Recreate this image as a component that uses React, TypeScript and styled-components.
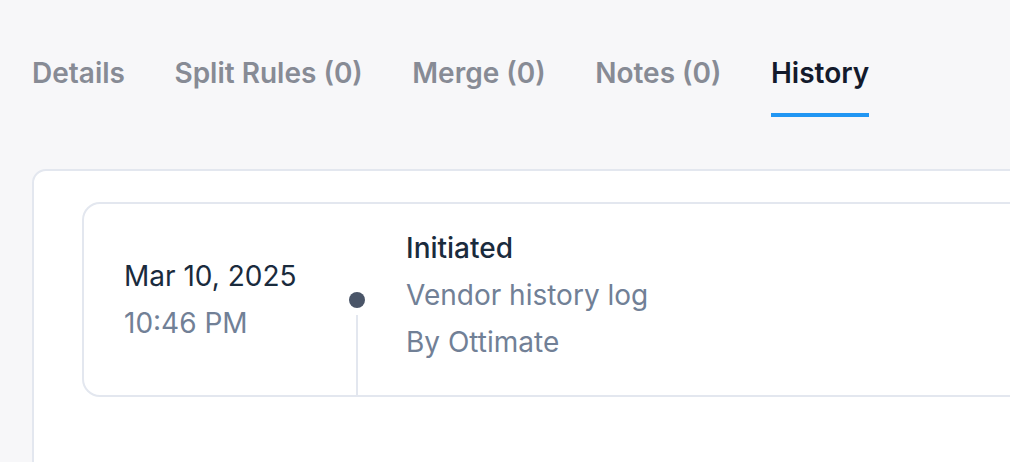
import React from "react";
import styled, { createGlobalStyle } from "styled-components";

const GlobalStyle = createGlobalStyle`
  html, body {
    margin: 0;
    padding: 0;
    background: #f7f7f9;
    overflow: hidden;
  }
  body {
    font-family: Inter, "Noto Sans", "Liberation Sans", sans-serif;
  }
`;

const Page = styled.div`
  width: 1200px;
  height: 462px;
  padding: 56px 0 0 32px;
  box-sizing: border-box;
`;

const TabBar = styled.nav`
  display: flex;
  gap: 49.5px;
`;

const Tab = styled.div<{ $active?: boolean }>`
  font-size: 28px;
  line-height: 34px;
  font-weight: 600;
  color: ${(p) => (p.$active ? "#131a2c" : "#878b95")};
  padding-bottom: 23px;
  border-bottom: 4px solid ${(p) => (p.$active ? "#2196f3" : "transparent")};
`;

const Panel = styled.section`
  margin-top: 52px;
  background: #ffffff;
  border: 2px solid #e3e7ef;
  border-radius: 14px;
  padding: 31px 0 40px 48px;
  height: 400px;
  box-sizing: border-box;
`;

const Entry = styled.div`
  display: flex;
  background: #ffffff;
  border: 2px solid #e3e7ef;
  border-radius: 18px;
  padding-left: 40px;
`;

const DateCol = styled.div`
  width: 225px;
  align-self: center;
  margin-top: 1px;
  font-size: 28px;
  line-height: 47px;
`;

const DateLine = styled.div`
  color: #1a2b3d;
`;

const TimeLine = styled.div`
  color: #718096;
`;

const Rail = styled.div`
  width: 16px;
  display: grid;
  grid-template-rows: 1fr auto 1fr;
  justify-items: center;
`;

const Dot = styled.div`
  grid-row: 2;
  width: 16px;
  height: 16px;
  border-radius: 50%;
  background: #4a5568;
`;

const Line = styled.div`
  grid-row: 3;
  width: 2px;
  margin-top: 7px;
  margin-right: 1px;
  background: #e3e7ef;
`;

const Body = styled.div`
  margin-left: 41px;
  padding: 21px 0 29px;
  font-size: 28px;
  line-height: 47px;
`;

const Title = styled.div`
  color: #1a2b3d;
  font-weight: 500;
`;

const Meta = styled.div`
  color: #718096;
`;

const tabs = ["Details", "Split Rules (0)", "Merge (0)", "Notes (0)", "History"];

export default function App() {
  return (
    <Page>
      <GlobalStyle />
      <TabBar>
        {tabs.map((t) => (
          <Tab key={t} $active={t === "History"}>
            {t}
          </Tab>
        ))}
      </TabBar>
      <Panel>
        <Entry>
          <DateCol>
            <DateLine>Mar 10, 2025</DateLine>
            <TimeLine>10:46 PM</TimeLine>
          </DateCol>
          <Rail>
            <Dot />
            <Line />
          </Rail>
          <Body>
            <Title>Initiated</Title>
            <Meta>Vendor history log</Meta>
            <Meta>By Ottimate</Meta>
          </Body>
        </Entry>
      </Panel>
    </Page>
  );
}
